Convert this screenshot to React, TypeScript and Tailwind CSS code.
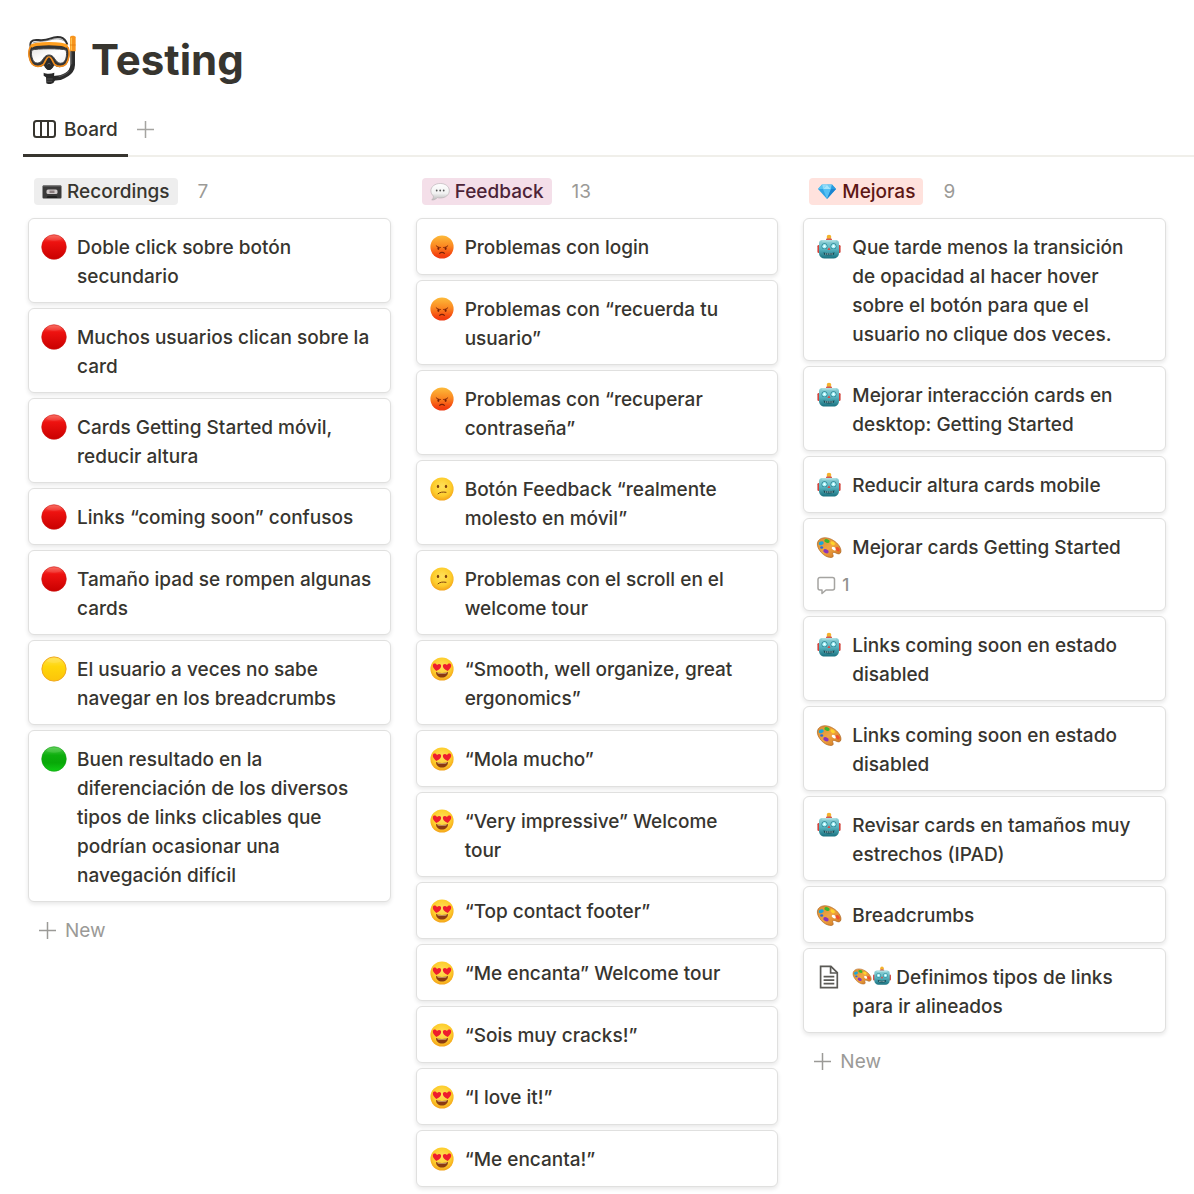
import React from "react";

type IconName = "red" | "yellow" | "green" | "angry" | "confused" | "love" | "robot" | "palette" | "page";

type CardData = {
  icon: IconName;
  text: string;
  inline?: IconName[];
  comments?: number;
};

type ColumnData = {
  title: string;
  count: number;
  pill: string;
  badge: React.ReactNode;
  cards: CardData[];
  canAdd: boolean;
};

function SharedGradients() {
  return (
    <svg className="absolute size-0" aria-hidden="true">
      <defs>
        <linearGradient id="g-red" x1="0" y1="0" x2="0" y2="1">
          <stop offset="0" stopColor="#f8665c" />
          <stop offset="0.3" stopColor="#ee1210" />
          <stop offset="1" stopColor="#c90000" />
        </linearGradient>
        <linearGradient id="g-yellow" x1="0" y1="0" x2="0" y2="1">
          <stop offset="0" stopColor="#ffe250" />
          <stop offset="0.4" stopColor="#ffd60a" />
          <stop offset="1" stopColor="#fcc40a" />
        </linearGradient>
        <linearGradient id="g-green" x1="0" y1="0" x2="0" y2="1">
          <stop offset="0" stopColor="#52cb4e" />
          <stop offset="0.35" stopColor="#0dae0d" />
          <stop offset="0.65" stopColor="#08a808" />
          <stop offset="1" stopColor="#10cc14" />
        </linearGradient>
        <linearGradient id="g-angry" x1="0" y1="0" x2="0" y2="1">
          <stop offset="0" stopColor="#fdbb3a" />
          <stop offset="0.45" stopColor="#fb8a22" />
          <stop offset="0.85" stopColor="#f4420f" />
          <stop offset="1" stopColor="#ee3a12" />
        </linearGradient>
        <radialGradient id="g-face" cx="0.5" cy="0.4" r="0.6">
          <stop offset="0" stopColor="#ffe15a" />
          <stop offset="0.65" stopColor="#fdcd2c" />
          <stop offset="1" stopColor="#f4a31a" />
        </radialGradient>
        <linearGradient id="g-robot" x1="0" y1="0" x2="0" y2="1">
          <stop offset="0" stopColor="#93d3d8" />
          <stop offset="0.5" stopColor="#56b2be" />
          <stop offset="1" stopColor="#19717f" />
        </linearGradient>
        <linearGradient id="g-palette" x1="0" y1="0" x2="1" y2="1">
          <stop offset="0" stopColor="#d98a32" />
          <stop offset="0.5" stopColor="#f0a540" />
          <stop offset="1" stopColor="#c96f22" />
        </linearGradient>
        <linearGradient id="g-bubble" x1="0" y1="0" x2="0" y2="1">
          <stop offset="0" stopColor="#ffffff" />
          <stop offset="0.6" stopColor="#f1f1f1" />
          <stop offset="1" stopColor="#b9b9b9" />
        </linearGradient>
        <linearGradient id="g-lens" x1="0" y1="0" x2="1" y2="1">
          <stop offset="0" stopColor="#e4e4e4" />
          <stop offset="0.5" stopColor="#ffffff" />
          <stop offset="1" stopColor="#f1f1f1" />
        </linearGradient>
      </defs>
    </svg>
  );
}

const heart = "M0 3.6C-3 1.4-3.9.1-3.7-1.5-3.4-3.2-1.2-3.6 0-1.7 1.2-3.6 3.4-3.2 3.7-1.5 3.9.1 3 1.4 0 3.6Z";

const drawings: Record<IconName, React.ReactNode> = {
  red: (
    <>
      <circle cx="13" cy="13" r="12.3" fill="url(#g-red)" stroke="#cf1410" strokeWidth="0.6" />
      <ellipse cx="13" cy="4.2" rx="7.5" ry="2.6" fill="#ff9b90" opacity="0.18" />
    </>
  ),
  yellow: (
    <>
      <circle cx="13" cy="13" r="12.1" fill="url(#g-yellow)" stroke="#f0a81e" strokeWidth="1" />
      <ellipse cx="13" cy="4.6" rx="7" ry="2.4" fill="#fff19a" opacity="0.2" />
    </>
  ),
  green: (
    <>
      <circle cx="13" cy="13" r="12.3" fill="url(#g-green)" stroke="#16a016" strokeWidth="0.6" />
      <ellipse cx="13" cy="4.2" rx="7.5" ry="2.6" fill="#a6ea9c" opacity="0.18" />
    </>
  ),
  angry: (
    <>
      <circle cx="13" cy="13" r="11.6" fill="url(#g-angry)" />
      <g stroke="#7a2108" strokeLinecap="round" fill="none">
        <path d="M7.2 11.8C8.5 13 10 13.5 11.4 13.5M18.8 11.8C17.5 13 16 13.5 14.6 13.5" strokeWidth="0.9" />
        <path d="M10.6 19.4c1.3-1.4 3.500-1.4 4.800 0" strokeWidth="1.1" />
      </g>
      <ellipse cx="9.4" cy="14.5" rx="1" ry="1.400" fill="#7a2108" />
      <ellipse cx="16.6" cy="14.5" rx="1" ry="1.400" fill="#7a2108" />
    </>
  ),
  confused: (
    <>
      <circle cx="13" cy="13" r="11.6" fill="url(#g-face)" />
      <ellipse cx="9" cy="10.4" rx="1.2" ry="1.700" fill="#80410c" />
      <ellipse cx="17" cy="10.4" rx="1.2" ry="1.700" fill="#80410c" />
      <path d="M9 17.800c1.8-1.7 4.700-2.100 8-1.500" stroke="#80410c" strokeWidth="1" strokeLinecap="round" fill="none" />
    </>
  ),
  love: (
    <>
      <circle cx="13" cy="13" r="11.6" fill="url(#g-face)" />
      <path d="M7 16c3.800 1.200 8.200 1.200 12 0 0 3.600-2.700 5.500-6 5.500S7 19.600 7 16Z" fill="#8a3a12" />
      <path d="M8 16.500c3.200.8 6.800.8 10 0-.3.700-.9 1-1.600 1H9.600c-.8 0-1.300-.4-1.600-1Z" fill="#f3d9a8" />
      <path d={heart} transform="translate(7.800 11) rotate(8) scale(1.120)" fill="#ee1d2d" />
      <path d={heart} transform="translate(18.200 11) rotate(-8) scale(1.120)" fill="#ee1d2d" />
    </>
  ),
  robot: (
    <>
      <path d="M13 3v4" stroke="#5c8f96" strokeWidth="3" />
      <circle cx="13" cy="3" r="2.300" fill="#f5b32c" />
      <rect x="10" y="4.600" width="6" height="1.900" rx="0.900" fill="#d4594f" />
      <rect x="1.400" y="11" width="3" height="8" rx="1.300" fill="#d2433c" />
      <rect x="21.600" y="11" width="3" height="8" rx="1.300" fill="#d2433c" />
      <path d="M6.500 6h13c2 0 3.500 1.200 3.500 3v10c0 3.500-2.500 5.500-5.500 5.500h-9C5.500 24.500 3 22.500 3 19V9c0-1.800 1.500-3 3.500-3Z" fill="url(#g-robot)" />
      <path d="M6.500 6.900h13" stroke="#c4e9ea" strokeWidth="0.900" strokeLinecap="round" />
      <circle cx="8.500" cy="12.200" r="2.900" fill="#2d8291" />
      <circle cx="17.500" cy="12.200" r="2.900" fill="#2d8291" />
      <circle cx="8.500" cy="12.200" r="2.200" fill="#a9f4fa" />
      <circle cx="17.500" cy="12.200" r="2.200" fill="#a9f4fa" />
      <circle cx="8.500" cy="12.200" r="0.900" fill="#fff" />
      <circle cx="17.500" cy="12.200" r="0.900" fill="#fff" />
      <path d="M13 13.300l1.600 2.700h-3.200Z" fill="#e2453c" />
      <path d="M7.500 18.300c3 1.200 8 1.200 11 0l-.7 2.400c-3 .9-6.600.9-9.600 0Z" fill="#124c57" />
      <path d="M9 20h8" stroke="#e5f3f4" strokeWidth="0.800" strokeDasharray="1.200 0.600" />
    </>
  ),
  palette: (
    <>
      <path
        d="M2.300 6.700C5.500 2.600 12 3 17.500 6.500c4.700 3 7.900 7.400 7.400 11.200-.3 2.200-2.300 2.700-4.200 1.700-1.700-.8-3.100-1.500-3.900-.5-.7.800.6 2 .4 3.300-.3 1.600-2.900 1.500-5.200.8C5.800 21.200-1.300 12.200 2.300 6.700Z"
        fill="url(#g-palette)"
        stroke="#ad661f"
        strokeWidth="0.700"
      />
      <ellipse cx="17.800" cy="14.600" rx="2.300" ry="1.500" transform="rotate(35 17.800 14.600)" fill="#fff" />
      <ellipse cx="5.200" cy="9.300" rx="2.600" ry="1.800" transform="rotate(-20 5.200 9.300)" fill="#1aa7d8" />
      <ellipse cx="11" cy="7" rx="2.700" ry="1.800" transform="rotate(15 11 7)" fill="#3cb52c" />
      <ellipse cx="16.700" cy="9.300" rx="2.400" ry="1.600" transform="rotate(30 16.700 9.300)" fill="#ffd42b" />
      <ellipse cx="21.700" cy="15.200" rx="2.500" ry="1.700" transform="rotate(50 21.700 15.200)" fill="#f0512e" />
      <ellipse cx="10" cy="17.300" rx="2.800" ry="2" transform="rotate(25 10 17.300)" fill="#8b35b8" />
      <ellipse cx="5.700" cy="13.500" rx="1.500" ry="1.200" fill="#2d6bd8" />
    </>
  ),
  page: (
    <g fill="none" stroke="#5a5955" strokeWidth="1.700">
      <path d="M4.600 2.300h10.300l6.400 6.400v15H4.600Z" />
      <path d="M14.600 2.300v6.700h6.700" />
      <path d="M7.600 12.700h10.700M7.600 16.200h10.700M7.600 19.700h10.700" />
    </g>
  ),
};

function Icon({ name, className }: { name: IconName; className: string }) {
  return (
    <svg viewBox="0 0 26 26" className={className} aria-hidden="true">
      {drawings[name]}
    </svg>
  );
}

function DivingMask() {
  return (
    <svg viewBox="54 42 150 150" className="size-[50px] shrink-0" aria-hidden="true">
      <path d="M63 82C57 62 65 56 82 57c16 1 24 2 38-4 22-9 44-8 52 18" fill="none" stroke="#303030" strokeWidth="6" />
      <path d="M68 66c18-6 34-4 52-9 18-6 34-4 44 4" fill="none" stroke="#6a6a6a" strokeWidth="2" />
      <path d="M188 88v44c0 8-2 12-6 18-7 10-20 16-32 20l-20 2" fill="none" stroke="#2c2c2c" strokeWidth="14" strokeLinejoin="round" />
      <path d="M185 92v38M178 150c-8 9-20 14-32 17" fill="none" stroke="#6b6b6b" strokeWidth="2" />
      <path d="M180 49c0-6 17-6 17 0v42h-17Z" fill="#f7941d" />
      <path d="M184 50v38" stroke="#ffc34d" strokeWidth="4" />
      <path d="M179 72h18" stroke="#e0780b" strokeWidth="2" />
      <path d="M101 155c8 4 22 4 32 0l-1 12 8 2-8 14c-2 7-20 8-23 4l-1-18-7-5Z" fill="#292929" />
      <path d="M110 174h18M111 181h15" stroke="#606060" strokeWidth="2" />
      <path
        d="M60 78c10-16 102-16 114 0 8 17 4 40-5 52-8 9-26 12-36 3-6 10-10 14-16 14s-10-4-16-14c-10 9-28 5-36-4-9-12-13-35-5-51Z"
        fill="#343434"
      />
      <path
        d="M60 80c8-14 103-14 114 0 7 16 2 38-6 49-8 9-25 10-34 1-7-8-8-22-17-22s-10 14-17 22c-9 9-26 8-34-2-8-11-13-32-6-48Z"
        fill="none"
        stroke="#f28c1b"
        strokeWidth="5"
      />
      <path d="M63 76c14-11 94-11 108 0" fill="none" stroke="#ff9f1f" strokeWidth="10" />
      <path
        d="M66 87c14-5 88-5 102 0 4 14 0 29-6 36-6 5-15 5-20 0-9-8-11-21-25-21s-16 13-25 21c-6 5-15 4-20-1-6-8-10-23-6-35Z"
        fill="url(#g-lens)"
        stroke="#444444"
        strokeWidth="3"
      />
      <path d="M117 108c-5 8-12 20-12 28 3 9 7 11 12 11s9-3 12-11c0-8-7-20-12-28Z" fill="#2b2b2b" />
      <path d="M112 130c3-4 7-4 10 0" fill="none" stroke="#777" strokeWidth="2" />
    </svg>
  );
}

function Plus() {
  return (
    <svg viewBox="0 0 17 17" className="size-[17px] shrink-0" fill="none" stroke="currentColor" strokeWidth="1.500" aria-hidden="true">
      <path d="M8.500 0v17M0 8.500h17" />
    </svg>
  );
}

function Cassette() {
  return (
    <svg viewBox="0 0 20 14" className="h-[14px] w-5 shrink-0" aria-hidden="true">
      <rect x="0.500" y="0.500" width="19" height="13" rx="1" fill="#3a3a3a" />
      <path d="M1 1h18" stroke="#6a6a6a" />
      <rect x="4.500" y="4.500" width="11" height="4.500" rx="1.500" fill="#cfcaca" />
      <rect x="7.500" y="5.500" width="5" height="2.500" fill="#8b7f80" />
      <path d="M4.500 13l1-2h9l1 2" fill="#222" />
    </svg>
  );
}

function Bubble() {
  return (
    <svg viewBox="0 0 20 20" className="size-5 shrink-0" aria-hidden="true">
      <path
        d="M10.300 1.500c5.200 0 9 3 9 7.200s-3.800 7.300-9 7.300c-1 0-2-.1-2.900-.4-1.400 1.500-3.400 2.500-5.700 2.400 1.200-1 1.800-2.400 1.700-4C1.900 12.700.900 11 .900 8.800c0-4.300 4.200-7.300 9.400-7.300Z"
        fill="url(#g-bubble)"
        stroke="#b4adb0"
        strokeWidth="0.600"
      />
      <circle cx="6.700" cy="8.500" r="0.900" fill="#555" />
      <circle cx="10.200" cy="8.500" r="0.900" fill="#555" />
      <circle cx="13.700" cy="8.500" r="0.900" fill="#555" />
    </svg>
  );
}

function Gem() {
  return (
    <svg viewBox="0 0 20 20" className="size-5 shrink-0" aria-hidden="true">
      <path d="M5 2.500h10L19 7 10 17 1 7Z" fill="#2fa4e4" />
      <path d="M5 2.500 1 7h5Z" fill="#59c4f2" />
      <path d="M5 2.500 6 7l4-4.500Z" fill="#8fdcfa" />
      <path d="M10 2.500 6 7h8Z" fill="#a5e4fb" />
      <path d="M10 2.500 14 7l1-4.500Z" fill="#6fccf5" />
      <path d="M15 2.500 14 7h5Z" fill="#2a9ce0" />
      <path d="M6 7h8l-4 10Z" fill="#55c0f4" />
      <path d="M14 7h5l-9 10Z" fill="#1b84cf" />
    </svg>
  );
}

const columns: ColumnData[] = [
  {
    title: "Recordings",
    count: 7,
    pill: "bg-[#eeeeee] text-[#37352f]",
    badge: <Cassette />,
    canAdd: true,
    cards: [
      { icon: "red", text: "Doble click sobre botón secundario" },
      { icon: "red", text: "Muchos usuarios clican sobre la card" },
      { icon: "red", text: "Cards Getting Started móvil, reducir altura" },
      { icon: "red", text: "Links “coming soon” confusos" },
      { icon: "red", text: "Tamaño ipad se rompen algunas cards" },
      { icon: "yellow", text: "El usuario a veces no sabe navegar en los breadcrumbs" },
      {
        icon: "green",
        text: "Buen resultado en la diferenciación de los diversos tipos de links clicables que podrían ocasionar una navegación difícil",
      },
    ],
  },
  {
    title: "Feedback",
    count: 13,
    pill: "bg-[#f4dfe9] text-[#4c2337]",
    badge: <Bubble />,
    canAdd: false,
    cards: [
      { icon: "angry", text: "Problemas con login" },
      { icon: "angry", text: "Problemas con “recuerda tu usuario”" },
      { icon: "angry", text: "Problemas con “recuperar contraseña”" },
      { icon: "confused", text: "Botón Feedback “realmente molesto en móvil”" },
      { icon: "confused", text: "Problemas con el scroll en el welcome tour" },
      { icon: "love", text: "“Smooth, well organize, great ergonomics”" },
      { icon: "love", text: "“Mola mucho”" },
      { icon: "love", text: "“Very impressive” Welcome\ntour" },
      { icon: "love", text: "“Top contact footer”" },
      { icon: "love", text: "“Me encanta” Welcome tour" },
      { icon: "love", text: "“Sois muy cracks!”" },
      { icon: "love", text: "“I love it!”" },
      { icon: "love", text: "“Me encanta!”" },
    ],
  },
  {
    title: "Mejoras",
    count: 9,
    pill: "bg-[#ffe2dd] text-[#5d1715]",
    badge: <Gem />,
    canAdd: true,
    cards: [
      {
        icon: "robot",
        text: "Que tarde menos la transición de opacidad al hacer hover\nsobre el botón para que el usuario no clique dos veces.",
      },
      { icon: "robot", text: "Mejorar interacción cards en desktop: Getting Started" },
      { icon: "robot", text: "Reducir altura cards mobile" },
      { icon: "palette", text: "Mejorar cards Getting Started", comments: 1 },
      { icon: "robot", text: "Links coming soon en estado disabled" },
      { icon: "palette", text: "Links coming soon en estado disabled" },
      { icon: "robot", text: "Revisar cards en tamaños muy estrechos (IPAD)" },
      { icon: "palette", text: "Breadcrumbs" },
      { icon: "page", text: "Definimos tipos de links para ir alineados", inline: ["palette", "robot"] },
    ],
  },
];

function Card({ card }: { card: CardData }) {
  return (
    <li className="min-h-[57px] rounded-md border border-[#e0e0df] bg-white pt-[14px] pr-4 pb-[11px] pl-3 shadow-[0_2px_4px_rgba(15,15,15,0.1)]">
      <div className="flex gap-[10px]">
        <Icon name={card.icon} className="mt-px size-[26px] shrink-0" />
        <p className="min-w-0 flex-1 whitespace-pre-line">
          {card.inline && (
            <span className="mr-1 inline-flex align-[-2px]">
              {card.inline.map((name) => (
                <Icon key={name} name={name} className="size-5" />
              ))}
            </span>
          )}
          {card.text}
        </p>
      </div>
      {card.comments !== undefined && (
        <div className="mt-[10px] flex items-center gap-[6px] pb-px text-[17px] leading-[26px] text-[#91918e]">
          <svg viewBox="0 0 20 20" className="size-5" fill="none" stroke="#a5a4a1" strokeWidth="1.500" strokeLinejoin="round" aria-hidden="true">
            <path d="M4 2.500h12.500a2 2 0 0 1 2 2V13a2 2 0 0 1-2 2H10l-4 3.500V15H4a2 2 0 0 1-2-2V4.500a2 2 0 0 1 2-2Z" />
          </svg>
          {card.comments}
        </div>
      )}
    </li>
  );
}

function Column({ column }: { column: ColumnData }) {
  return (
    <section>
      <header className="flex items-center gap-5 pl-[6px]">
        <h2 className={`flex h-[27px] items-center gap-[5px] rounded px-2 ${column.pill}`}>
          {column.badge}
          {column.title}
        </h2>
        <span className="font-normal text-[#9b9a97]">{column.count}</span>
      </header>
      <ul className="mt-3 flex flex-col gap-[5px]">
        {column.cards.map((card, index) => (
          <Card key={index} card={card} />
        ))}
      </ul>
      {column.canAdd && (
        <button type="button" className="mt-[14px] ml-[11px] flex items-center gap-[9px] font-normal text-[#9b9a97]">
          <Plus />
          New
        </button>
      )}
    </section>
  );
}

export default function App() {
  return (
    <main className="min-h-screen bg-white font-['Inter','Liberation_Sans',sans-serif] text-[19px] leading-[29px] font-medium text-[#37352f]">
      <SharedGradients />
      <div className="flex items-center gap-[13px] px-7 pt-[34px]">
        <DivingMask />
        <h1 className="pt-px text-[42px] leading-[50px] font-bold">Testing</h1>
      </div>
      <nav className="mt-[18px] ml-[23px] flex h-[54px] items-stretch border-b-2 border-[#f0efea]">
        <button type="button" className="-mb-[2px] flex items-center gap-2 border-b-3 border-[#37352f] px-[10px] pt-px">
          <svg viewBox="0 0 23 18" className="h-[18px] w-[23px]" fill="none" stroke="currentColor" strokeWidth="2" aria-hidden="true">
            <rect x="1" y="1" width="21" height="16" rx="2.500" />
            <path d="M8 1v16M15 1v16" />
          </svg>
          Board
        </button>
        <button type="button" aria-label="Add view" className="ml-[9px] flex items-center pt-px text-[#a5a4a1]">
          <Plus />
        </button>
      </nav>
      <div className="grid grid-cols-3 items-start gap-[25px] px-7 pt-[20px] pb-1">
        {columns.map((column) => (
          <Column key={column.title} column={column} />
        ))}
      </div>
    </main>
  );
}
